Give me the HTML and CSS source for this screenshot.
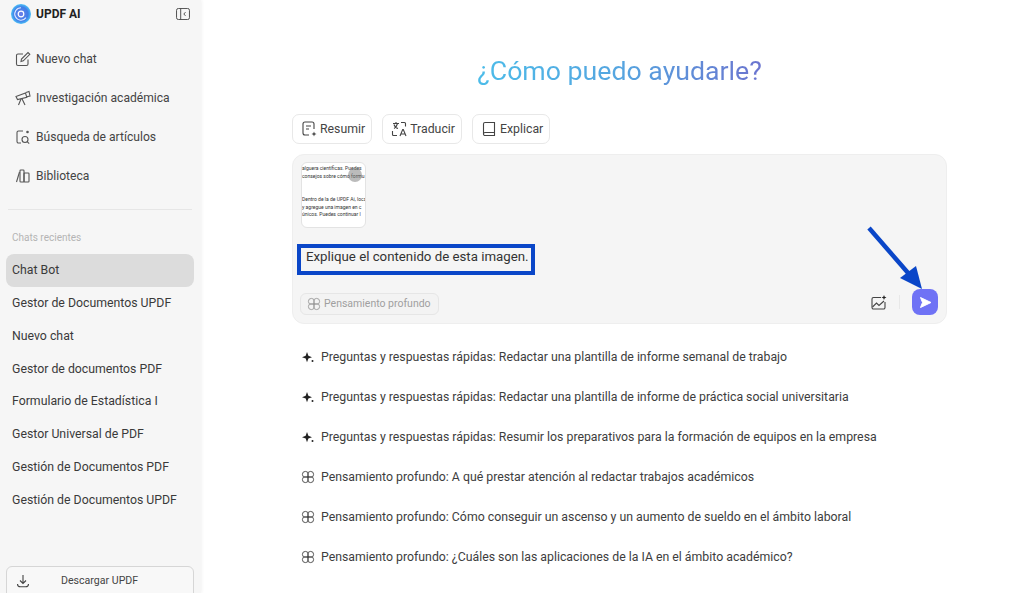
FILE: index.html
```html
<!DOCTYPE html>
<html lang="es">
<head>
<meta charset="utf-8">
<title>UPDF AI</title>
<link rel="stylesheet" href="styles.css">
</head>
<body>
<div class="app">
  <aside class="sidebar">
    <header class="brand">
      <svg class="logo" width="20" height="20" viewBox="0 0 20 20"><defs><radialGradient id="lg" cx="50%" cy="50%" r="50%"><stop offset="0" stop-color="#6f80ea"/><stop offset="0.7" stop-color="#3f7fe8"/><stop offset="1" stop-color="#4cc0f7"/></radialGradient></defs><circle cx="10" cy="10" r="10" fill="url(#lg)"/><path d="M10 3.800a6.200 6.200 0 1 0 5 9.800" fill="none" stroke="#dfe8ff" stroke-width="1.100"/><circle cx="10" cy="10" r="2.800" fill="none" stroke="#fff" stroke-width="1.200"/></svg>
      <span class="brand-name">UPDF AI</span>
      <svg class="collapse" width="14" height="12" viewBox="0 0 15 13" fill="none" stroke="#444" stroke-width="1"><rect x=".5" y=".5" width="14" height="12" rx="2"/><path d="M5 .5v12"/><path d="M10.200 4.500 8.400 6.500l1.800 2"/></svg>
    </header>
    <nav class="menu">
      <a class="menu-item"><svg width="16" height="16" viewBox="0 0 16 16" fill="none" stroke="#555" stroke-width="1.100"><path d="M13 8.500V13a1.500 1.500 0 0 1-1.500 1.500H3A1.500 1.500 0 0 1 1.500 13V4.500A1.500 1.500 0 0 1 3 3h5"/><path d="M6 10.500 6.500 8l6.500-6.500 1.800 1.800L8.300 9.800z"/></svg>Nuevo chat</a>
      <a class="menu-item"><svg width="16" height="16" viewBox="0 0 16 16" fill="none" stroke="#555" stroke-width="1.100"><path d="M1 6.500 10.500 3l1.300 4.300L2.500 9.500z"/><path d="M11 2.500 14 1.500l1 4.500-3.200.8"/><path d="M6 9 3.500 15M7 8.800 10 15"/></svg>Investigación académica</a>
      <a class="menu-item"><svg width="16" height="16" viewBox="0 0 16 16" fill="none" stroke="#555" stroke-width="1.100"><path d="M8 2H3.500A1.500 1.500 0 0 0 2 3.500v9A1.500 1.500 0 0 0 3.500 14H6"/><circle cx="10" cy="10.500" r="3"/><path d="m12.200 12.700 2 2"/><circle cx="12.500" cy="3" r="1.300" fill="#555" stroke="none"/></svg>Búsqueda de artículos</a>
      <a class="menu-item"><svg width="16" height="16" viewBox="0 0 16 16" fill="none" stroke="#555" stroke-width="1.100"><path d="M4.500 4 1.500 14"/><rect x="5" y="2" width="4" height="12" rx=".8"/><rect x="9" y="5" width="5" height="9" rx=".8"/></svg>Biblioteca</a>
    </nav>
    <hr class="rule">
    <p class="recent-title">Chats recientes</p>
    <ul class="chats">
      <li class="chat active">Chat Bot</li>
      <li class="chat">Gestor de Documentos UPDF</li>
      <li class="chat">Nuevo chat</li>
      <li class="chat">Gestor de documentos PDF</li>
      <li class="chat">Formulario de Estadística I</li>
      <li class="chat">Gestor Universal de PDF</li>
      <li class="chat">Gestión de Documentos PDF</li>
      <li class="chat">Gestión de Documentos UPDF</li>
    </ul>
    <button class="download"><svg width="14" height="14" viewBox="0 0 14 14" fill="none" stroke="#444" stroke-width="1.100"><path d="M7 1v8M4 6.500 7 9.500l3-3"/><path d="M1.500 10c0 2 1.500 2.800 3 2.800h5c1.500 0 3-.8 3-2.800"/></svg><span>Descargar UPDF</span></button>
  </aside>
  <main class="main">
    <h1 class="title">¿Cómo puedo ayudarle?</h1>
    <div class="chips">
      <button class="chip"><svg width="18" height="18" viewBox="0 0 18 18" fill="none" stroke="#444" stroke-width="1.100"><path d="M9 15H5a2 2 0 0 1-2-2V4a2 2 0 0 1 2-2h7a2 2 0 0 1 2 2v5"/><path d="M6 6h5M6 9h3"/><path d="M14 11.500l.7 1.800 1.800.7-1.800.7-.7 1.800-.7-1.800-1.800-.7 1.800-.7z" fill="#444" stroke="none"/></svg>Resumir</button>
      <button class="chip"><svg width="18" height="18" viewBox="0 0 18 18" fill="none" stroke="#444" stroke-width="1.100"><path d="M3 3.500h6M6 2v1.500M4 8.500c2-1 3-3 3.500-5M4 4.500c.6 2 2 3.500 4 4"/><path d="M11 2.500h3.500a1 1 0 0 1 1 1v3M2.500 11v3.500a1 1 0 0 0 1 1H7"/><path d="m10 16 2.700-6.500h.6L16 16M11 14h4"/></svg>Traducir</button>
      <button class="chip"><svg width="18" height="18" viewBox="0 0 18 18" fill="none" stroke="#444" stroke-width="1.100"><path d="M3.500 14V4a1.500 1.500 0 0 1 1.500-1.500h9.500v10H5A1.500 1.500 0 0 0 3.500 14a1.500 1.500 0 0 0 1.500 1.500h9.500v-3"/></svg>Explicar</button>
    </div>
    <section class="composer">
      <div class="thumb">
        <div class="thumb-text">
          <p>alguera científicas. Puedes</p>
          <p>consejos sobre cómo formu</p>
          <p class="gap">Dentro de la de UPDF Ai, loca</p>
          <p>y agregue una imagen en c</p>
          <p>únicos. Puedes continuar l</p>
        </div>
        <span class="thumb-close"></span>
      </div>
      <div class="prompt">Explique el contenido de esta imagen.</div>
      <div class="composer-foot">
        <span class="deep"><svg class="atom" width="14" height="14" viewBox="0 0 14 14" fill="none" stroke="#999" stroke-width=".9"><circle cx="4.400" cy="4.400" r="3"/><circle cx="9.600" cy="4.400" r="3"/><circle cx="4.400" cy="9.600" r="3"/><circle cx="9.600" cy="9.600" r="3"/><circle cx="7" cy="7" r="1" fill="#999" stroke="none"/></svg>Pensamiento profundo</span>
        <svg class="img-add" width="16" height="15" viewBox="0 0 16 15" fill="none" stroke="#444" stroke-width="1.100"><path d="M10 2.500H2.500A1.500 1.500 0 0 0 1 4v8.500A1.500 1.500 0 0 0 2.500 14h10a1.500 1.500 0 0 0 1.500-1.500V7"/><path d="m1.500 12 4-4 2.500 2.500 5-4.500"/><path d="m13 0 .7 1.800 1.800.7-1.800.7-.7 1.800-.7-1.800-1.800-.7 1.800-.7z" fill="#222" stroke="none"/></svg>
        <span class="sep"></span>
        <button class="send" aria-label="Enviar"><svg width="13" height="13" viewBox="0 0 13 13"><path d="M1.500 1.500 12 6.500 1.500 11.500 3.500 6.500z" fill="#fff" stroke="#fff" stroke-width="1" stroke-linejoin="round"/></svg></button>
      </div>
    </section>
    <ul class="suggestions">
      <li class="sug"><svg class="spark" width="14" height="14" viewBox="0 0 14 14"><path d="M6 2 7.400 5.800 11 7.200 7.400 8.500 6 12.300 4.700 8.500 1 7.200 4.700 5.800z" fill="#222"/><circle cx="11.500" cy="11" r="1" fill="#222"/></svg>Preguntas y respuestas rápidas: Redactar una plantilla de informe semanal de trabajo</li>
      <li class="sug"><svg class="spark" width="14" height="14" viewBox="0 0 14 14"><path d="M6 2 7.400 5.800 11 7.200 7.400 8.500 6 12.300 4.700 8.500 1 7.200 4.700 5.800z" fill="#222"/><circle cx="11.500" cy="11" r="1" fill="#222"/></svg>Preguntas y respuestas rápidas: Redactar una plantilla de informe de práctica social universitaria</li>
      <li class="sug"><svg class="spark" width="14" height="14" viewBox="0 0 14 14"><path d="M6 2 7.400 5.800 11 7.200 7.400 8.500 6 12.300 4.700 8.500 1 7.200 4.700 5.800z" fill="#222"/><circle cx="11.500" cy="11" r="1" fill="#222"/></svg>Preguntas y respuestas rápidas: Resumir los preparativos para la formación de equipos en la empresa</li>
      <li class="sug"><svg class="spark" width="14" height="14" viewBox="0 0 14 14" fill="none" stroke="#444" stroke-width=".9"><circle cx="4.400" cy="4.400" r="3"/><circle cx="9.600" cy="4.400" r="3"/><circle cx="4.400" cy="9.600" r="3"/><circle cx="9.600" cy="9.600" r="3"/><circle cx="7" cy="7" r="1" fill="#444" stroke="none"/></svg>Pensamiento profundo: A qué prestar atención al redactar trabajos académicos</li>
      <li class="sug"><svg class="spark" width="14" height="14" viewBox="0 0 14 14" fill="none" stroke="#444" stroke-width=".9"><circle cx="4.400" cy="4.400" r="3"/><circle cx="9.600" cy="4.400" r="3"/><circle cx="4.400" cy="9.600" r="3"/><circle cx="9.600" cy="9.600" r="3"/><circle cx="7" cy="7" r="1" fill="#444" stroke="none"/></svg>Pensamiento profundo: Cómo conseguir un ascenso y un aumento de sueldo en el ámbito laboral</li>
      <li class="sug"><svg class="spark" width="14" height="14" viewBox="0 0 14 14" fill="none" stroke="#444" stroke-width=".9"><circle cx="4.400" cy="4.400" r="3"/><circle cx="9.600" cy="4.400" r="3"/><circle cx="4.400" cy="9.600" r="3"/><circle cx="9.600" cy="9.600" r="3"/><circle cx="7" cy="7" r="1" fill="#444" stroke="none"/></svg>Pensamiento profundo: ¿Cuáles son las aplicaciones de la IA en el ámbito académico?</li>
    </ul>
  </main>
  <div class="callout-box"></div>
  <svg class="callout-arrow" width="70" height="70" viewBox="0 0 70 70"><path d="M2 2 42 48" stroke="#0a46c8" stroke-width="4.500" fill="none"/><path d="M55 63 33 52 49 40z" fill="#0a46c8"/></svg>
</div>
</body>
</html>
```
FILE: styles.css
```css
* { box-sizing: border-box; }
html, body { margin: 0; height: 100%; overflow: hidden; }
body { font-family: Roboto, "Noto Sans", sans-serif; color: #333; background: #fff; font-size: 12.300px; }
ul, p, h1 { margin: 0; padding: 0; list-style: none; }
button { font: inherit; color: inherit; }

.app { position: relative; display: flex; width: 1024px; height: 593px; overflow: hidden; }

.sidebar { flex: 0 0 201px; height: 593px; background: #f6f6f6; box-shadow: 1px 0 3px rgba(0,0,0,.05); padding: 0 7px 0 6px; display: flex; flex-direction: column; }
.brand { display: flex; align-items: center; height: 27px; padding-left: 5px; gap: 5px; }
.brand-name { font-weight: 700; font-size: 12px; color: #222; }
.collapse { margin-left: auto; margin-right: 4px; }
.menu { margin-top: 12px; display: flex; flex-direction: column; }
.menu-item { display: flex; align-items: center; gap: 5px; height: 39px; padding-left: 9px; color: #444; font-size: 12.100px; }
.rule { border: 0; border-top: 1px solid #e6e6e6; margin: 14px 2px 0 2px; width: 184px; }
.recent-title { margin-top: 21px; padding-left: 6px; font-size: 10px; color: #b4b4b4; line-height: 14px; }
.chats { margin-top: 9px; }
.chat { height: 32.800px; line-height: 32.800px; padding-left: 6px; color: #3a3a3a; white-space: nowrap; }
.active { background: #dcdcdc; border-radius: 8px; height: 33px; }
.download { margin-top: auto; margin-bottom: -6px; height: 33px; width: 188px; flex: none; display: flex; align-items: center; background: #f8f8f8; border: 1px solid #d6d6d6; border-radius: 6px; padding: 0 0 4px 9px; font-size: 10.600px; cursor: pointer; }
.download span { margin-left: 31px; color: #444; }

.main { flex: 1; padding-left: 91px; padding-right: 77px; display: flex; flex-direction: column; }
.title { margin-top: 52px; text-align: center; font-size: 26.700px; line-height: 38px; font-weight: 400; background: linear-gradient(90deg, #4cbce9 0%, #55a5e0 50%, #6b74cf 100%); -webkit-background-clip: text; background-clip: text; color: transparent; align-self: center; }
.chips { display: flex; gap: 10px; margin-top: 24px; }
.chip { display: flex; align-items: center; gap: 2px; height: 30px; padding: 0 6px 0 7px; background: #fff; border: 1px solid #e8e8e8; border-radius: 7px; color: #444; white-space: nowrap; }
.composer { position: relative; margin-top: 10px; height: 170px; background: #f5f5f5; border: 1px solid #eeeeee; border-radius: 12px; padding: 7px 8px 8px 7px; display: flex; flex-direction: column; }
.thumb { position: relative; margin-left: 1px; width: 65px; height: 66px; background: #fff; border: 1px solid #e3e3e3; border-radius: 6px; overflow: hidden; }
.thumb-text { font-size: 5px; line-height: 7.600px; color: #333; white-space: nowrap; padding-top: 2px; }
.thumb-text .gap { margin-top: 16px; }
.thumb-close { position: absolute; right: 3px; top: 5px; width: 14px; height: 14px; background: rgba(120,120,120,.5); border-radius: 50%; }
.prompt { margin-top: 20px; padding-left: 6px; line-height: 18px; font-size: 13.250px; color: #333; }
.composer-foot { margin-top: auto; display: flex; align-items: center; }
.deep { display: inline-flex; align-items: center; gap: 3px; height: 22px; margin-top: 3px; padding: 0 7px 0 6px; background: #f3f3f3; border: 1px solid #e6e6e6; border-radius: 6px; font-size: 10.500px; color: #a0a0a0; }
.img-add { margin-left: auto; }
.sep { width: 1px; height: 14px; background: #e8e8e8; margin: 0 12px 0 12px; }
.send { width: 26px; height: 26px; background: #6f72f5; border: 0; border-radius: 8px; display: flex; align-items: center; justify-content: center; padding: 0; }

.suggestions { margin-top: 13px; display: flex; flex-direction: column; }
.sug { height: 40px; display: flex; align-items: center; gap: 6px; padding-left: 9px; color: #3d3d3d; white-space: nowrap; }
.spark { flex: none; }

.callout-box { position: absolute; left: 297px; top: 244px; width: 238px; height: 31px; border: 4px solid #0a46c8; }
.callout-arrow { position: absolute; left: 867px; top: 226px; }
```
